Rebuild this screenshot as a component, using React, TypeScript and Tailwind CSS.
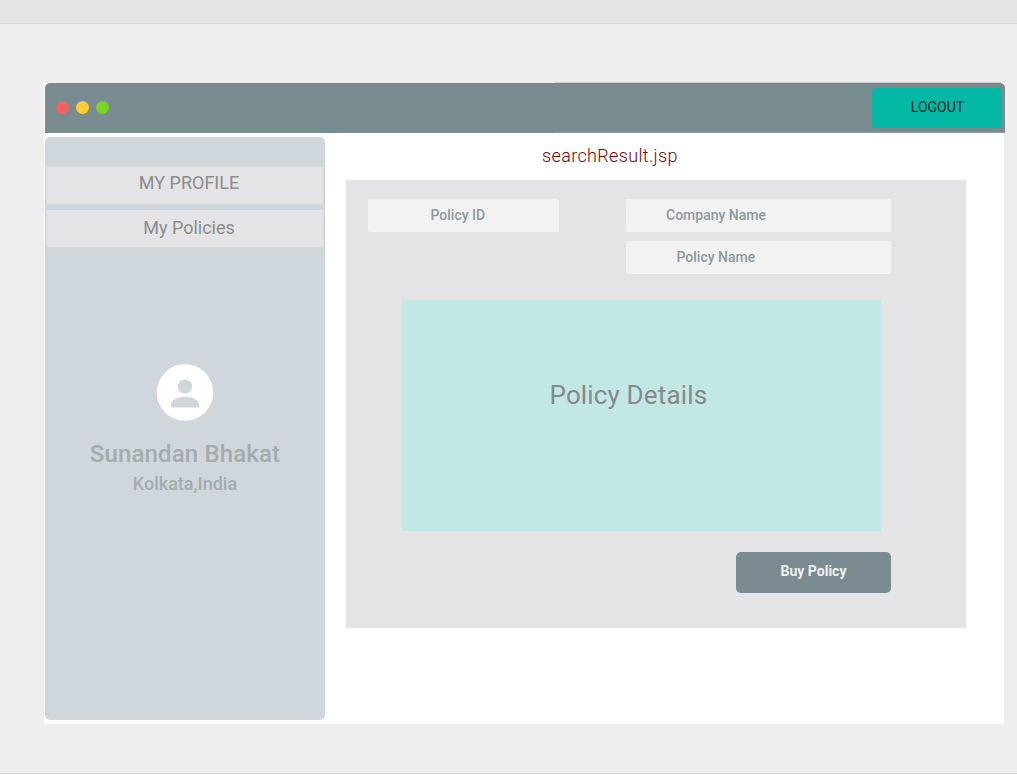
function TitleBar() {
  return (
    <header className="relative -mr-px ml-px flex h-[50px] items-start rounded-t-[5px] bg-[#788b8f]">
      <span className="absolute -top-px left-[510px] h-px w-[446px] bg-[#cbd1d3]" />
      <span className="absolute bottom-0 left-[510px] h-px w-[450px] bg-[#93a2a5]" />
      <div className="flex items-center gap-[7px] pt-[18px] pl-[11px]">
        <span className="size-[13px] rounded-full bg-[#f66060]" />
        <span className="size-[13px] rounded-full bg-[#ffcb2e]" />
        <span className="size-[13px] rounded-full bg-[#7dd321]" />
      </div>
      <button className="mt-[5px] mr-[3px] ml-auto h-10 w-[130px] rounded bg-[#03b9a6] pb-0.5 pl-px text-sm leading-5 text-[#0d2b28]">
        LOGOUT
      </button>
    </header>
  );
}

function Sidebar() {
  return (
    <aside className="mt-1 ml-px flex h-[583px] w-[280px] flex-col items-center rounded-[5px] bg-[#cfd7dd] px-0.5 pt-[30px]">
      <nav className="flex w-full flex-col gap-1.5 text-center text-[18px] leading-[21px] text-[#8b8b8c]">
        <a className="h-[37px] bg-[#e4e4e6] pt-[5px] pl-2">MY PROFILE</a>
        <a className="h-[37px] bg-[#e4e4e6] pt-[7px] pl-2">My Policies</a>
      </nav>
      <div className="mt-[117px] mb-px size-14">
        <svg viewBox="0 0 56 56" className="size-full overflow-visible">
          <circle cx="28" cy="28.5" r="28.3" fill="#fff" />
          <circle cx="28" cy="22.5" r="7.1" fill="#cfd7dd" />
          <path d="M14 43.5v-3.6c0-4.7 9.3-7.1 14-7.1s14 2.4 14 7.1v3.6z" fill="#cfd7dd" />
        </svg>
      </div>
      <p className="mt-[17px] text-2xl leading-8 font-medium tracking-[0.15px] whitespace-nowrap text-[#a3abac]">Sunandan Bhakat</p>
      <p className="mt-0.5 text-[18px] leading-6 font-medium text-[#a3abac]">Kolkata,India</p>
    </aside>
  );
}

function PolicyPanel() {
  return (
    <section className="mt-[13px] ml-[21px] h-[448px] w-[620px] bg-[#e4e4e6] text-sm text-[#8b9a9e]">
      <div className="flex h-[120px] items-start justify-between pt-[18px] pr-[75px] pl-[22px] leading-5 font-medium">
        <div className="mt-px h-[33px] w-[191px] rounded-xs bg-[#f2f2f2] pt-1.5 pl-[62.5px]">Policy ID</div>
        <div className="mt-[0.5px] flex w-[265px] flex-col gap-[9px]">
          <div className="h-[33px] rounded-xs bg-[#f2f2f2] pt-1.5 pl-10">Company Name</div>
          <div className="h-[33px] rounded-xs bg-[#f2f2f2] pt-1.5 pl-[50.5px]">Policy Name</div>
        </div>
      </div>
      <div className="ml-14 h-[231px] w-[479px] bg-[#c2e8e6] pt-[79px] pl-[147.5px] text-[26px] leading-8 tracking-[0.15px] text-[#868889]">
        Policy Details
      </div>
      <button className="mt-[21px] ml-[390px] h-[41px] w-[155px] rounded-[5px] bg-[#7b8b91] pb-1 leading-5 font-bold text-[#eef1f2]">
        Buy Policy
      </button>
    </section>
  );
}

export default function App() {
  return (
    <div className="flex h-[775px] w-[1017px] flex-col overflow-hidden bg-[#fafafa] font-['Roboto',sans-serif]">
      <div className="h-6 shrink-0 border-b border-[#d8d8d8] bg-[#e4e4e4]" />
      <div className="h-[750px] shrink-0 border-b border-[#d8d8d8] bg-[#eeeeee] pt-[59px] pl-11">
        <div className="h-[641px] w-[960px] bg-white">
          <TitleBar />
          <div className="flex">
            <Sidebar />
            <main>
              <h1 className="mt-3 ml-[217px] text-[18px] leading-[22px] font-light tracking-[0.35px] text-[#740508]">searchResult.jsp</h1>
              <PolicyPanel />
            </main>
          </div>
        </div>
      </div>
    </div>
  );
}
